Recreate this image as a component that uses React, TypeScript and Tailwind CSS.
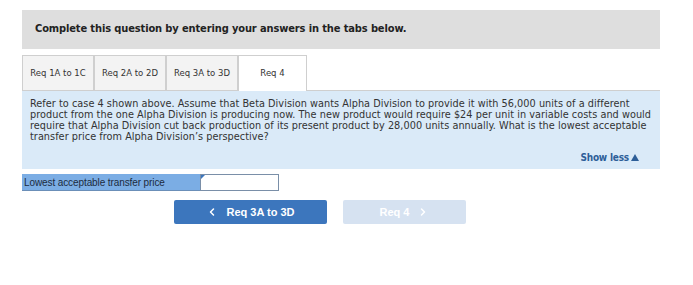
import { ChevronLeft, ChevronRight } from "lucide-react";

const tabs = ["Req 1A to 1C", "Req 2A to 2D", "Req 3A to 3D"];

export default function App() {
  return (
    <div className="w-[693px] h-[285px] bg-white font-['DejaVu_Sans_Condensed',sans-serif] text-[#222]">
      <div className="ml-[22px] w-[638px] pt-[10px]">
        <div className="h-[39px] bg-[#dedede] flex items-center px-[13px]">
          <p className="text-[11px] font-bold text-[#222] tracking-[-0.12px]">
            Complete this question by entering your answers in the tabs below.
          </p>
        </div>

        <div className="mt-[6px] flex h-[36px] font-['DejaVu_Sans',sans-serif]">
          {tabs.map((t) => (
            <div
              key={t}
              className="w-[72px] border border-[#cfcfcf] bg-[#f3f3f3] flex items-center justify-center text-[8.5px] text-[#333]"
            >
              {t}
            </div>
          ))}
          <div className="w-[69px] border border-b-0 border-[#cfcfcf] bg-white flex items-center justify-center text-[8.5px] text-[#333]">
            Req 4
          </div>
          <div className="flex-1 border-b border-[#cfcfcf]" />
        </div>

        <div className="bg-[#daeaf8] px-[8px] pt-[7px] pb-[6px] text-[10.8px] leading-[11px] text-[#333]">
          <p className="whitespace-nowrap tracking-[0.04px]">
            Refer to case 4 shown above. Assume that Beta Division wants Alpha Division to provide it with 56,000 units of a different
            <br />
            product from the one Alpha Division is producing now. The new product would require $24 per unit in variable costs and would
            <br />
            require that Alpha Division cut back production of its present product by 28,000 units annually. What is the lowest acceptable
            <br />
            transfer price from Alpha Division’s perspective?
          </p>
          <div className="mt-[10px] flex justify-end pr-[13px]">
            <span className="font-bold text-[10px] tracking-[-0.2px] text-[#2d5e98] flex items-center gap-[1px]">
              Show less
              <svg width="8" height="7" viewBox="0 0 8 7" className="ml-[1px]">
                <path d="M0 7 L4 0 L8 7 Z" fill="#2d5e98" />
              </svg>
            </span>
          </div>
        </div>

        <div className="mt-[5px] flex h-[17px] font-['Liberation_Sans',sans-serif]">
          <div className="w-[178px] bg-[#7badE4] border-b border-[#6b8fb8] flex items-center pl-[2px] text-[10px] text-[#1b2b3e] tracking-[-0.1px]">
            Lowest acceptable transfer price
          </div>
          <div className="relative w-[79px] bg-white border border-[#7a8fa8]">
            <svg width="4" height="4" viewBox="0 0 4 4" className="absolute left-0 top-0">
              <path d="M0 0 L4 0 L0 4 Z" fill="#3c76bd" />
            </svg>
          </div>
        </div>

        <div className="mt-[9px] flex gap-[16px] pl-[152px] font-['Liberation_Sans',sans-serif]">
          <div className="w-[153px] h-[24px] rounded-[2px] bg-[#3c76bd] flex items-center justify-center gap-[8px] text-white text-[11px] font-bold">
            <ChevronLeft size={12} strokeWidth={3} />
            <span>Req 3A to 3D</span>
          </div>
          <div className="w-[123px] h-[24px] rounded-[2px] bg-[#d6e2f1] flex items-center justify-center gap-[8px] text-white text-[11px] font-bold">
            <span>Req 4</span>
            <ChevronRight size={12} strokeWidth={3} />
          </div>
        </div>
      </div>
    </div>
  );
}
